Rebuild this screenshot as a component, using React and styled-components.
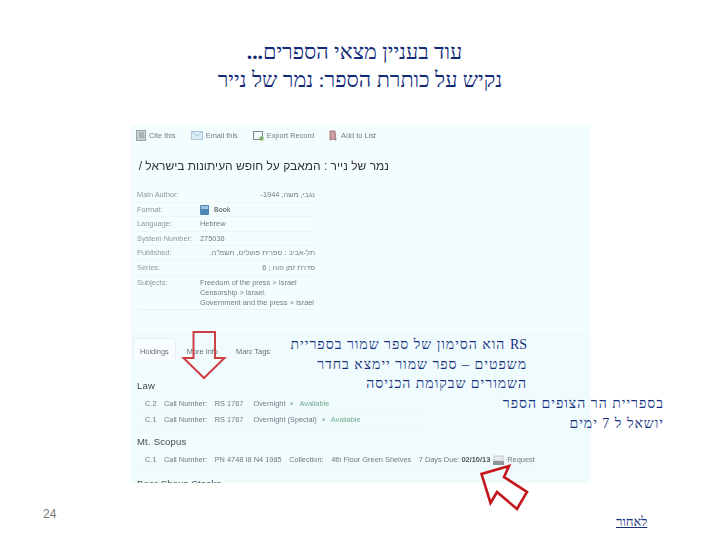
import styled, { createGlobalStyle } from "styled-components";

const GlobalStyle = createGlobalStyle`
  html, body {
    margin: 0;
    padding: 0;
    background: #fff;
  }
`;

const Slide = styled.div`
  position: relative;
  width: 720px;
  height: 540px;
  overflow: hidden;
  display: flex;
  flex-direction: column;
  align-items: center;
`;
const Heading = styled.h1`
  margin: 38px 0 0;
  direction: rtl;
  text-align: center;
  font-family: "Liberation Serif", "Noto Sans", serif;
  font-weight: 400;
  font-size: 21.6px;
  line-height: 28px;
  color: #102a78;
`;
const HeadingLine = styled.span`
  display: block;
  padding-right: ${(p) => p.$indent || 0}px;
`;
const Dots = styled.b`
  font-weight: 700;
`;
const Panel = styled.div`
  box-sizing: border-box;
  width: 459px;
  height: 358px;
  margin: 31px 0 0 1px;
  overflow: hidden;
  background: #f4fdfe;
  font-family: "Liberation Sans", sans-serif;
  font-size: 7.4px;
  color: #6f7a80;
  filter: blur(0.3px);
`;
const Toolbar = styled.div`
  height: 21px;
  padding: 0 0 0 5px;
  display: flex;
  align-items: center;
  gap: 15px;
  border-bottom: 1px solid #eef7f9;
`;
const ToolItem = styled.span`
  display: flex;
  align-items: center;
  gap: 3px;
`;
const BookTitle = styled.div`
  margin: 12px 0 0 6px;
  width: 252px;
  direction: rtl;
  white-space: nowrap;
  font-family: "Liberation Sans", "Noto Sans", sans-serif;
  font-size: 12px;
  line-height: 14px;
  color: #333;
`;
const Details = styled.div`
  margin: 15px 0 0 6px;
  width: 178px;
  border-bottom: 1px solid #e8f1f3;
`;
const DetailRow = styled.div`
  display: grid;
  grid-template-columns: 63px 1fr;
  padding: 2px 0 1.6px;
  line-height: 10px;
  white-space: nowrap;
  border-top: ${(p) => (p.$first ? "0" : "1px solid #edf5f7")};
`;
const Label = styled.span`
  color: #8d979c;
`;
const Value = styled.span`
  display: flex;
  flex-direction: ${(p) => (p.$stack ? "column" : "row")};
  align-items: ${(p) => (p.$stack ? "flex-start" : "center")};
  gap: ${(p) => (p.$stack ? "0" : "5px")};
  direction: ${(p) => (p.$rtl ? "rtl" : "ltr")};
  font-weight: ${(p) => (p.$bold ? 700 : 400)};
  font-size: ${(p) => (p.$bold ? "6.5px" : "7.4px")};
`;
const Holdings = styled.div`
  margin-top: 22px;
  padding-top: 6px;
  height: 200px;
  background: #f0fbfe;
`;
const Tabs = styled.div`
  padding-left: 2px;
  display: flex;
  height: 22px;
`;
const Tab = styled.span`
  box-sizing: border-box;
  padding: 8px 6px 0;
  margin-right: 4px;
  color: #666f74;
  border: 1px solid ${(p) => (p.$active ? "#e6eff2" : "transparent")};
  border-bottom: 0;
  border-radius: 4px 4px 0 0;
  background: ${(p) => (p.$active ? "#f8feff" : "transparent")};
`;
const Location = styled.div`
  margin: ${(p) => p.$gap}px 0 0 6px;
  font-size: 9.5px;
  line-height: 12px;
  color: #44494d;
  letter-spacing: 0.2px;
`;
const Copies = styled.div`
  margin: 4px 0 0 6px;
  width: ${(p) => p.$width}px;
`;
const CopyRow = styled.div`
  display: flex;
  align-items: center;
  gap: 7.5px;
  height: 15px;
  padding-left: 8px;
  white-space: nowrap;
  border-bottom: 1px solid #edf5f7;
`;
const Loan = styled.span`
  display: flex;
  align-items: center;
  gap: 5px;
  margin-left: 2.5px;
`;
const StatusDot = styled.i`
  width: 3px;
  height: 3px;
  border-radius: 50%;
  background: #a3c9b4;
`;
const Status = styled.span`
  margin-left: 1px;
  color: #6fa98a;
`;
const Strong = styled.b`
  color: #555;
`;
const Note = styled.div`
  position: absolute;
  top: ${(p) => p.$top}px;
  right: ${(p) => p.$right}px;
  direction: rtl;
  white-space: nowrap;
  font-family: "Liberation Serif", "Noto Sans", serif;
  font-size: 14px;
  line-height: 19.5px;
  letter-spacing: 1px;
  color: #14307f;
`;
const Latin = styled.span`
  letter-spacing: 0;
`;
const Overlay = styled.svg`
  position: absolute;
  left: 0;
  top: 0;
  pointer-events: none;
`;
const PageNumber = styled.span`
  position: absolute;
  left: 43px;
  top: 507px;
  font-family: "Liberation Sans", sans-serif;
  font-size: 12px;
  color: #777;
`;
const BackLink = styled.a`
  position: absolute;
  left: 616px;
  top: 514px;
  direction: rtl;
  font-family: "Liberation Serif", "Noto Sans", serif;
  font-size: 13px;
  color: #14307f;
  text-decoration: underline;
`;

const DocIcon = () => (
  <svg width="10" height="11" viewBox="0 0 10 11">
    <rect x="0.5" y="0.5" width="9" height="10" fill="#c9cfd2" stroke="#9aa3a8" />
    <path d="M3 3h5M3 5h5M3 7h5" stroke="#8b9499" />
  </svg>
);
const MailIcon = () => (
  <svg width="12" height="9" viewBox="0 0 12 9">
    <rect x="0.5" y="0.5" width="11" height="8" fill="#dcecf6" stroke="#a9c6de" />
    <path d="M1 1l5 4L11 1" fill="none" stroke="#a9c6de" />
  </svg>
);
const ExportIcon = () => (
  <svg width="11" height="11" viewBox="0 0 11 11">
    <rect x="0.5" y="1.5" width="9" height="8" fill="#f4f8f9" stroke="#7f8a90" />
    <circle cx="8.5" cy="8.5" r="2.2" fill="#7eb36a" />
  </svg>
);
const ListIcon = () => (
  <svg width="9" height="11" viewBox="0 0 9 11">
    <path d="M1 1h5l1 9-3-1-3 1z" fill="#c9a3a6" stroke="#8f4f55" strokeWidth="0.7" />
  </svg>
);
const BookIcon = () => (
  <svg width="9" height="10" viewBox="0 0 9 10">
    <rect width="9" height="10" rx="1" fill="#4e86b8" />
    <rect x="1" y="1" width="7" height="3" fill="#9cc3e0" />
  </svg>
);
const RequestIcon = () => (
  <svg width="11" height="10" viewBox="0 0 11 10">
    <rect x="1" y="1" width="9" height="5" fill="#e8ecee" stroke="#a7afb3" strokeWidth="0.6" />
    <rect x="0" y="6" width="11" height="4" fill="#8e979c" />
  </svg>
);

const App = () => (
  <Slide>
    <GlobalStyle />
    <Heading>
      <HeadingLine $indent={11}>עוד בעניין מצאי הספרים<Dots>...</Dots></HeadingLine>
      <HeadingLine>נקיש על כותרת הספר: נמר של נייר</HeadingLine>
    </Heading>
    <Panel>
      <Toolbar>
        <ToolItem><DocIcon />Cite this</ToolItem>
        <ToolItem><MailIcon />Email this</ToolItem>
        <ToolItem><ExportIcon />Export Record</ToolItem>
        <ToolItem><ListIcon />Add to List</ToolItem>
      </Toolbar>
      <BookTitle>נמר של נייר : המאבק על חופש העיתונות בישראל /</BookTitle>
      <Details>
        <DetailRow $first><Label>Main Author:</Label><Value $rtl>נגבי, משה, 1944-</Value></DetailRow>
        <DetailRow><Label>Format:</Label><Value $bold><BookIcon />Book</Value></DetailRow>
        <DetailRow><Label>Language:</Label><Value>Hebrew</Value></DetailRow>
        <DetailRow><Label>System Number:</Label><Value>275036</Value></DetailRow>
        <DetailRow><Label>Published:</Label><Value $rtl>תל-אביב : ספרית פועלים, תשמ"ה.</Value></DetailRow>
        <DetailRow><Label>Series:</Label><Value $rtl>סדרת זמן הוה ; 6</Value></DetailRow>
        <DetailRow>
          <Label>Subjects:</Label>
          <Value $stack>
            <span>Freedom of the press &gt; Israel</span>
            <span>Censorship &gt; Israel.</span>
            <span>Government and the press &gt; Israel</span>
          </Value>
        </DetailRow>
      </Details>
      <Holdings>
        <Tabs>
          <Tab $active>Holdings</Tab>
          <Tab>More Info</Tab>
          <Tab>Marc Tags</Tab>
        </Tabs>
        <Location $gap={20}>Law</Location>
        <Copies $width={285}>
          <CopyRow>
            <span>C.2</span><span>Call Number:</span><span>RS 1767</span>
            <Loan>Overnight<StatusDot /><Status>Available</Status></Loan>
          </CopyRow>
          <CopyRow>
            <span>C.1</span><span>Call Number:</span><span>RS 1767</span>
            <Loan>Overnight (Special)<StatusDot /><Status>Available</Status></Loan>
          </CopyRow>
        </Copies>
        <Location $gap={8}>Mt. Scopus</Location>
        <Copies $width={395}>
          <CopyRow>
            <span>C.1</span><span>Call Number:</span><span>PN 4748 I8 N4 1985</span>
            <span>Collection:</span><span>4th Floor Green Shelves</span>
            <ToolItem>
              <span>7 Days Due: <Strong>02/10/13</Strong></span>
              <RequestIcon />Request
            </ToolItem>
          </CopyRow>
        </Copies>
        <Location $gap={10}>Beer Sheva Stacks</Location>
      </Holdings>
    </Panel>

    <Note $top={335} $right={193}>
      <Latin>RS</Latin> הוא הסימון של ספר שמור בספריית
      <br />
      משפטים – ספר שמור יימצא בחדר
      <br />
      השמורים שבקומת הכניסה
    </Note>
    <Note $top={394} $right={56}>
      בספריית הר הצופים הספר
      <br />
      יושאל ל 7 ימים
    </Note>

    <Overlay width="720" height="540" viewBox="0 0 720 540">
      <path d="M193.5 332H215V358H224.5L204 378L183.5 358H193.5Z" fill="none" stroke="#cf3f46" strokeWidth="2" />
      <path d="M509 466L481.5 474L490.5 503L497 492L517 509L527 492L504 477Z" fill="none" stroke="#c4161c" strokeWidth="2.6" />
    </Overlay>

    <PageNumber>24</PageNumber>
    <BackLink href="#">לאחור</BackLink>
  </Slide>
);

export default App;
